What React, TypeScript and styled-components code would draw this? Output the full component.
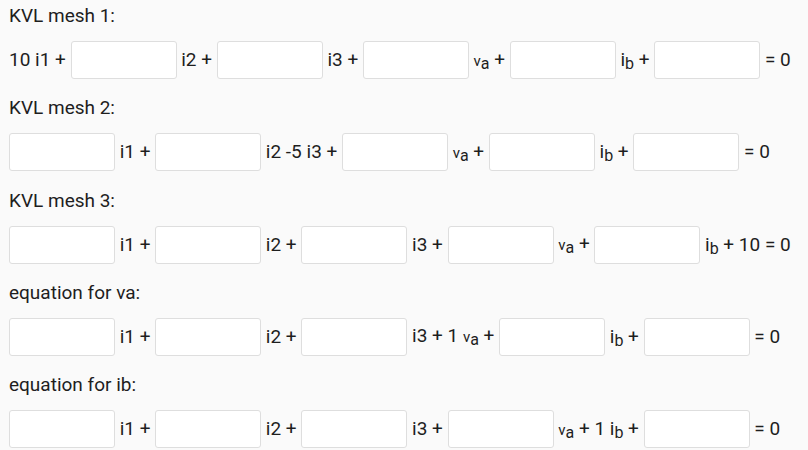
import React from "react";
import styled, { createGlobalStyle } from "styled-components";

const Global = createGlobalStyle`
  html, body { margin: 0; padding: 0; background: #fafafa; }
  body { font-family: Roboto, "Noto Sans", sans-serif; color: #1e1e1e; }
`;

const Page = styled.div`
  padding: 4px 9px 0 9px;
  display: flex;
  flex-direction: column;
  gap: 17.25px;
`;

const Block = styled.section`
  display: flex;
  flex-direction: column;
  gap: 13px;
`;

const Label = styled.div`
  font-size: 19px;
  line-height: 24px;
  height: 24px;
`;

const Row = styled.div`
  display: flex;
  align-items: center;
  gap: 4.7px;
  height: 38px;
  font-size: 19px;
  white-space: pre;
`;

const Term = styled.span`
  line-height: 24px;
`;

const Box = styled.input`
  box-sizing: border-box;
  width: 106px;
  height: 38px;
  flex: none;
  border: 1px solid #dedede;
  border-radius: 3px;
  background: #fff;
  margin: 0;
  padding: 0 8px;
  font: inherit;
  outline: none;
`;

const Small = styled.span`
  font-size: 15px;
`;

const Sub = styled.sub`
  font-size: 16px;
  vertical-align: -3px;
  line-height: 0;
`;

const V = () => (
  <>
    <Small>v</Small>
    <Sub>a</Sub>
  </>
);
const I = () => (
  <>
    i<Sub>b</Sub>
  </>
);

export default function App() {
  return (
    <>
      <Global />
      <Page>
        <Block>
          <Label>KVL mesh 1:</Label>
          <Row>
            <Term>10 i1 +</Term>
            <Box />
            <Term>i2 +</Term>
            <Box />
            <Term>i3 +</Term>
            <Box />
            <Term>
              <V /> +
            </Term>
            <Box />
            <Term>
              <I /> +
            </Term>
            <Box />
            <Term>= 0</Term>
          </Row>
        </Block>
        <Block>
          <Label>KVL mesh 2:</Label>
          <Row>
            <Box />
            <Term>i1 +</Term>
            <Box />
            <Term>i2 -5 i3 +</Term>
            <Box />
            <Term>
              <V /> +
            </Term>
            <Box />
            <Term>
              <I /> +
            </Term>
            <Box />
            <Term>= 0</Term>
          </Row>
        </Block>
        <Block>
          <Label>KVL mesh 3:</Label>
          <Row>
            <Box />
            <Term>i1 +</Term>
            <Box />
            <Term>i2 +</Term>
            <Box />
            <Term>i3 +</Term>
            <Box />
            <Term>
              <V /> +
            </Term>
            <Box />
            <Term>
              <I /> + 10 = 0
            </Term>
          </Row>
        </Block>
        <Block>
          <Label>equation for va:</Label>
          <Row>
            <Box />
            <Term>i1 +</Term>
            <Box />
            <Term>i2 +</Term>
            <Box />
            <Term>
              i3 + 1 <V /> +
            </Term>
            <Box />
            <Term>
              <I /> +
            </Term>
            <Box />
            <Term>= 0</Term>
          </Row>
        </Block>
        <Block>
          <Label>equation for ib:</Label>
          <Row>
            <Box />
            <Term>i1 +</Term>
            <Box />
            <Term>i2 +</Term>
            <Box />
            <Term>i3 +</Term>
            <Box />
            <Term>
              <V /> + 1 <I /> +
            </Term>
            <Box />
            <Term>= 0</Term>
          </Row>
        </Block>
      </Page>
    </>
  );
}
